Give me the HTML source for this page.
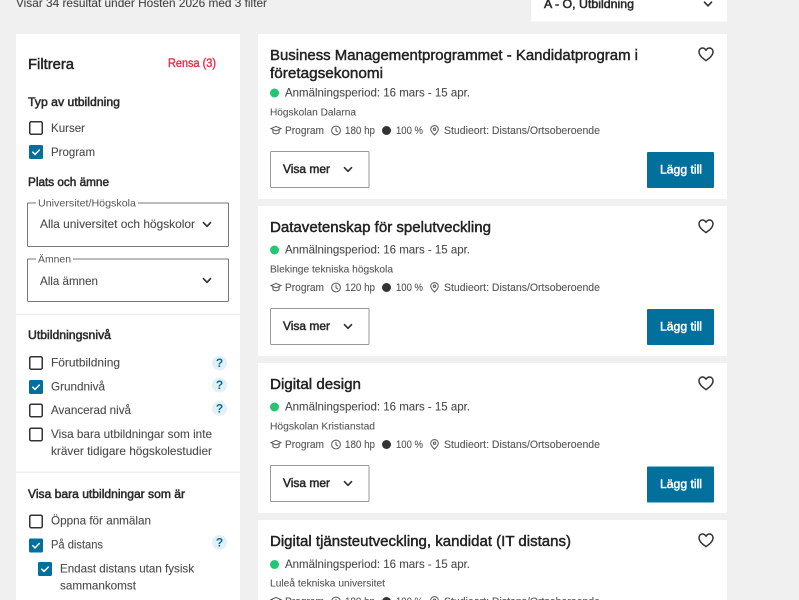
<!DOCTYPE html>
<html lang="sv"><head><meta charset="utf-8"><title>Utbildningar</title>
<style>
html,body{margin:0;padding:0;background:#f0f0f0;overflow:hidden}
svg{display:block}
text{font-family:"Liberation Sans",sans-serif;fill:#444;font-size:12px;white-space:pre}
.t{font-size:15px;fill:#222;stroke:#222;stroke-width:.45}
.h{font-size:11.5px;fill:#2a2a2a;stroke:#2a2a2a;stroke-width:.5}
.o{font-size:12px;fill:#4a4a4a;stroke:#4a4a4a;stroke-width:.1}
.m{font-size:11px;fill:#555;stroke:#555;stroke-width:.1}
.n{font-size:10px;fill:#555;stroke:#555;stroke-width:.08}
.l{font-size:10.5px;fill:#555}
.b{font-size:11.5px;fill:#2a2a2a;stroke:#2a2a2a;stroke-width:.5}
.w{font-size:11.5px;fill:#fff;stroke:#fff;stroke-width:.45}
.q{font-size:12px;font-weight:bold;fill:#0a6e99;text-anchor:middle}
.ch{fill:none;stroke:#333;stroke-width:1.7;stroke-linecap:round;stroke-linejoin:round}
.ic{fill:none;stroke:#555;stroke-width:1}
</style></head><body>
<svg width="799" height="600" viewBox="0 0 799 600" xmlns="http://www.w3.org/2000/svg">
<defs>
<g id="cb"><rect x=".75" y=".75" width="12.5" height="12.5" rx="1.5" fill="#fff" stroke="#333" stroke-width="1.5"/></g>
<g id="cc"><rect width="14" height="14" rx="1.5" fill="#02709c"/><path d="M3.8 7.2l2.3 2.2 4.2-4.4" fill="none" stroke="#fff" stroke-width="1.5" stroke-linecap="round" stroke-linejoin="round"/></g>
<g id="qm"><circle r="7.5" fill="#e3f0f6"/><text class="q" y="4.2">?</text></g>
<path id="chev" class="ch" d="M-3.5-1.8L0 1.8L3.5-1.8"/>
<path id="heart" d="M0 6.6C-2.6 4.6-7 1.8-7-2.2-7-4.6-5.3-6-3.5-6-2-6-.8-5.1 0-3.8.8-5.1 2-6 3.5-6 5.3-6 7-4.6 7-2.2 7 1.8 2.6 4.6 0 6.6Z" fill="none" stroke="#333" stroke-width="1.5" stroke-linejoin="round"/>
<g id="cap"><path class="ic" d="M.5 2.6L5.5.4l5 2.2-5 2.2Z"/><path class="ic" d="M2.4 4v2.6c1.6 1.7 4.6 1.7 6.2 0V4"/></g>
<g id="clock"><circle class="ic" cx="5" cy="5" r="4.4"/><path class="ic" d="M5 2.4V5.3L7 6.6"/></g>
<g id="pin"><path class="ic" d="M4.5.6C2.2.6.7 2.3.7 4.2.7 6.4 3 8.6 4.5 10 6 8.6 8.3 6.4 8.3 4.2 8.3 2.3 6.8.6 4.5.6Z"/><circle class="ic" cx="4.5" cy="4.2" r="1.2"/></g>
</defs>

<rect width="799" height="600" fill="#f0f0f0"/>
<text x="16" y="7" textLength="251" lengthAdjust="spacingAndGlyphs" style="font-size:12px;fill:#444;stroke:#444;stroke-width:.1">Visar 34 resultat under Hösten 2026 med 3 filter</text>
<rect x="531" y="-2" width="196" height="23.5" fill="#fff"/>
<text class="b" x="544" y="8" textLength="90" lengthAdjust="spacingAndGlyphs">A - O, Utbildning</text>
<use href="#chev" x="708" y="4"/>

<!-- Filter panel -->
<rect x="16" y="34" width="224" height="566" fill="#fff"/>
<rect x="16" y="313.5" width="224" height="1.5" fill="#f0f0f0"/>
<rect x="16" y="471.5" width="224" height="1.5" fill="#f0f0f0"/>
<text x="28" y="69" textLength="46" lengthAdjust="spacingAndGlyphs" style="font-size:14.5px;fill:#222;stroke:#222;stroke-width:.45">Filtrera</text>
<text x="168" y="67" textLength="48" lengthAdjust="spacingAndGlyphs" style="font-size:11.5px;fill:#e8304a;stroke:#e8304a;stroke-width:.4">Rensa (3)</text>

<text class="h" x="28" y="106" textLength="92" lengthAdjust="spacingAndGlyphs">Typ av utbildning</text>
<use href="#cb" x="29" y="121"/><text class="o" x="51" y="132" textLength="34" lengthAdjust="spacingAndGlyphs">Kurser</text>
<use href="#cc" x="29" y="145"/><text class="o" x="51" y="156" textLength="44" lengthAdjust="spacingAndGlyphs">Program</text>

<text class="h" x="28" y="186" textLength="81" lengthAdjust="spacingAndGlyphs">Plats och ämne</text>
<rect x="27.5" y="203" width="201" height="43.5" rx="1" fill="#fff" stroke="#777"/>
<rect x="36" y="200" width="102" height="6" fill="#fff"/>
<text class="l" x="38" y="206.5" textLength="98" lengthAdjust="spacingAndGlyphs">Universitet/Högskola</text>
<text class="o" x="40" y="228" textLength="155" lengthAdjust="spacingAndGlyphs">Alla universitet och högskolor</text>
<use href="#chev" x="207" y="224.5"/>

<rect x="27.5" y="259" width="201" height="42.5" rx="1" fill="#fff" stroke="#777"/>
<rect x="36" y="256" width="37" height="6" fill="#fff"/>
<text class="l" x="38" y="262.5" textLength="33" lengthAdjust="spacingAndGlyphs">Ämnen</text>
<text class="o" x="40" y="285" textLength="58" lengthAdjust="spacingAndGlyphs">Alla ämnen</text>
<use href="#chev" x="207" y="280.5"/>

<text class="h" x="28" y="339" textLength="83" lengthAdjust="spacingAndGlyphs">Utbildningsnivå</text>
<use href="#cb" x="29" y="356"/><text class="o" x="51" y="366.5" textLength="69" lengthAdjust="spacingAndGlyphs">Förutbildning</text><use href="#qm" x="219.5" y="363"/>
<use href="#cc" x="29" y="380"/><text class="o" x="51" y="390.5" textLength="54" lengthAdjust="spacingAndGlyphs">Grundnivå</text><use href="#qm" x="219.5" y="385"/>
<use href="#cb" x="29" y="403.5"/><text class="o" x="51" y="414" textLength="80" lengthAdjust="spacingAndGlyphs">Avancerad nivå</text><use href="#qm" x="219.5" y="408.5"/>
<use href="#cb" x="29" y="427.5"/><text class="o" x="51" y="438" textLength="161" lengthAdjust="spacingAndGlyphs">Visa bara utbildningar som inte</text>
<text class="o" x="51" y="455" textLength="161" lengthAdjust="spacingAndGlyphs">kräver tidigare högskolestudier</text>

<text class="h" x="28" y="498" textLength="157" lengthAdjust="spacingAndGlyphs">Visa bara utbildningar som är</text>
<use href="#cb" x="29" y="514.5"/><text class="o" x="51" y="524.5" textLength="100" lengthAdjust="spacingAndGlyphs">Öppna för anmälan</text>
<use href="#cc" x="29" y="538.5"/><text class="o" x="51" y="548.5" textLength="52" lengthAdjust="spacingAndGlyphs">På distans</text><use href="#qm" x="219.5" y="542.5"/>
<use href="#cc" x="38" y="562"/><text class="o" x="60" y="572.5" textLength="134" lengthAdjust="spacingAndGlyphs">Endast distans utan fysisk</text>
<text class="o" x="60" y="589.5" textLength="76" lengthAdjust="spacingAndGlyphs">sammankomst</text>

<!-- Card 1 -->
<rect x="258" y="34" width="469" height="165" fill="#fff"/>
<text class="t" x="270" y="60" textLength="368" lengthAdjust="spacingAndGlyphs">Business Managementprogrammet - Kandidatprogram i</text>
<text class="t" x="270" y="78" textLength="113" lengthAdjust="spacingAndGlyphs">företagsekonomi</text>
<use href="#heart" x="706" y="54"/>
<circle cx="274.5" cy="93" r="4.5" fill="#22c673"/>
<text class="o" x="285" y="96.5" textLength="185" lengthAdjust="spacingAndGlyphs">Anmälningsperiod: 16 mars - 15 apr.</text>
<text class="n" x="270" y="115.5" textLength="86" lengthAdjust="spacingAndGlyphs">Högskolan Dalarna</text>
<use href="#cap" x="270.5" y="126"/><text class="m" x="285" y="134" textLength="39" lengthAdjust="spacingAndGlyphs">Program</text>
<use href="#clock" x="331" y="125.5"/><text class="m" x="345" y="134" textLength="30" lengthAdjust="spacingAndGlyphs">180 hp</text>
<circle cx="386.5" cy="130.5" r="4.5" fill="#333"/><text class="m" x="396" y="134" textLength="27" lengthAdjust="spacingAndGlyphs">100 %</text>
<use href="#pin" x="430" y="125"/><text class="m" x="444" y="134" textLength="156" lengthAdjust="spacingAndGlyphs">Studieort: Distans/Ortsoberoende</text>
<rect x="270.5" y="151.5" width="98.5" height="36" rx="1" fill="#fff" stroke="#999"/>
<text class="b" x="283" y="173" textLength="47" lengthAdjust="spacingAndGlyphs">Visa mer</text>
<use href="#chev" x="348" y="169.5"/>
<rect x="647" y="152" width="67" height="36" rx="1" fill="#02709c"/>
<text class="w" x="660" y="173.5" textLength="42" lengthAdjust="spacingAndGlyphs">Lägg till</text>

<!-- Card 2 -->
<rect x="258" y="206" width="469" height="150" fill="#fff"/>
<text class="t" x="270" y="232" textLength="221" lengthAdjust="spacingAndGlyphs">Datavetenskap för spelutveckling</text>
<use href="#heart" x="706" y="226"/>
<circle cx="274.5" cy="250" r="4.5" fill="#22c673"/>
<text class="o" x="285" y="253.5" textLength="185" lengthAdjust="spacingAndGlyphs">Anmälningsperiod: 16 mars - 15 apr.</text>
<text class="n" x="270" y="272.5" textLength="123" lengthAdjust="spacingAndGlyphs">Blekinge tekniska högskola</text>
<use href="#cap" x="270.5" y="283"/><text class="m" x="285" y="291" textLength="39" lengthAdjust="spacingAndGlyphs">Program</text>
<use href="#clock" x="331" y="282.5"/><text class="m" x="345" y="291" textLength="30" lengthAdjust="spacingAndGlyphs">120 hp</text>
<circle cx="386.5" cy="287.5" r="4.5" fill="#333"/><text class="m" x="396" y="291" textLength="27" lengthAdjust="spacingAndGlyphs">100 %</text>
<use href="#pin" x="430" y="282"/><text class="m" x="444" y="291" textLength="156" lengthAdjust="spacingAndGlyphs">Studieort: Distans/Ortsoberoende</text>
<rect x="270.5" y="308.5" width="98.5" height="36" rx="1" fill="#fff" stroke="#999"/>
<text class="b" x="283" y="330" textLength="47" lengthAdjust="spacingAndGlyphs">Visa mer</text>
<use href="#chev" x="348" y="326.5"/>
<rect x="647" y="309" width="67" height="36" rx="1" fill="#02709c"/>
<text class="w" x="660" y="330.5" textLength="42" lengthAdjust="spacingAndGlyphs">Lägg till</text>

<!-- Card 3 -->
<rect x="258" y="363" width="469" height="150" fill="#fff"/>
<text class="t" x="270" y="389" textLength="91" lengthAdjust="spacingAndGlyphs">Digital design</text>
<use href="#heart" x="706" y="383"/>
<circle cx="274.5" cy="407" r="4.5" fill="#22c673"/>
<text class="o" x="285" y="410.5" textLength="185" lengthAdjust="spacingAndGlyphs">Anmälningsperiod: 16 mars - 15 apr.</text>
<text class="n" x="270" y="429.5" textLength="105" lengthAdjust="spacingAndGlyphs">Högskolan Kristianstad</text>
<use href="#cap" x="270.5" y="440"/><text class="m" x="285" y="448" textLength="39" lengthAdjust="spacingAndGlyphs">Program</text>
<use href="#clock" x="331" y="439.5"/><text class="m" x="345" y="448" textLength="30" lengthAdjust="spacingAndGlyphs">180 hp</text>
<circle cx="386.5" cy="444.5" r="4.5" fill="#333"/><text class="m" x="396" y="448" textLength="27" lengthAdjust="spacingAndGlyphs">100 %</text>
<use href="#pin" x="430" y="439"/><text class="m" x="444" y="448" textLength="156" lengthAdjust="spacingAndGlyphs">Studieort: Distans/Ortsoberoende</text>
<rect x="270.5" y="465.5" width="98.5" height="36" rx="1" fill="#fff" stroke="#999"/>
<text class="b" x="283" y="487" textLength="47" lengthAdjust="spacingAndGlyphs">Visa mer</text>
<use href="#chev" x="348" y="483.5"/>
<rect x="647" y="466.5" width="67" height="36" rx="1" fill="#02709c"/>
<text class="w" x="660" y="488" textLength="42" lengthAdjust="spacingAndGlyphs">Lägg till</text>

<!-- Card 4 -->
<rect x="258" y="520" width="469" height="80" fill="#fff"/>
<text class="t" x="270" y="546" textLength="301" lengthAdjust="spacingAndGlyphs">Digital tjänsteutveckling, kandidat (IT distans)</text>
<use href="#heart" x="706" y="540"/>
<circle cx="274.5" cy="564.5" r="4.5" fill="#22c673"/>
<text class="o" x="285" y="568" textLength="185" lengthAdjust="spacingAndGlyphs">Anmälningsperiod: 16 mars - 15 apr.</text>
<text class="n" x="270" y="586.5" textLength="115" lengthAdjust="spacingAndGlyphs">Luleå tekniska universitet</text>
<use href="#cap" x="270.5" y="597"/><text class="m" x="285" y="605" textLength="39" lengthAdjust="spacingAndGlyphs">Program</text>
<use href="#clock" x="331" y="596.5"/><text class="m" x="345" y="605" textLength="30" lengthAdjust="spacingAndGlyphs">180 hp</text>
<circle cx="386.5" cy="601.5" r="4.5" fill="#333"/><text class="m" x="396" y="605" textLength="27" lengthAdjust="spacingAndGlyphs">100 %</text>
<use href="#pin" x="430" y="596"/><text class="m" x="444" y="605" textLength="156" lengthAdjust="spacingAndGlyphs">Studieort: Distans/Ortsoberoende</text>
</svg>
</body></html>
